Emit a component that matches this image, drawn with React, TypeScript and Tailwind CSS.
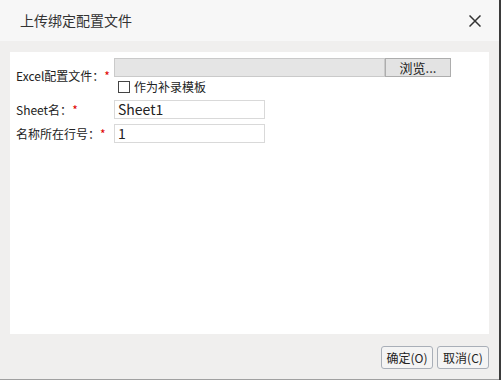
export default function App() {
  return (
    <div
      className="w-[501px] h-[380px] flex bg-[#f0efee] text-[#222]"
      style={{ fontFamily: '"Noto Sans CJK SC", "Noto Sans", sans-serif' }}
    >
      <div className="w-[499px] flex flex-col border-b border-[#a0a0a0]">
        {/* Header */}
        <div className="h-[41px] shrink-0 bg-[#f7f7f7] flex items-center justify-between pl-[20px] pr-[18px]">
          <span className="text-[14px] text-[#333]">上传绑定配置文件</span>
          <svg width="12" height="12" viewBox="0 0 12 12" className="text-[#333]">
            <path d="M0.5 0.5L11.5 11.5M11.5 0.5L0.5 11.5" stroke="currentColor" strokeWidth="1.5" />
          </svg>
        </div>

        {/* Body */}
        <div className="flex-1 flex flex-col px-[10px] pt-[11px]">
          <div className="flex-1 bg-white pl-[6px] pt-[6px] text-[12px]">
            {/* Excel file row */}
            <div className="flex items-center">
              <div className="w-[98px] shrink-0">
                Excel配置文件：<span className="text-[#e00000]">*</span>
              </div>
              <div className="flex flex-col">
                <div className="flex">
                  <div className="w-[271px] h-[19px] bg-[#e5e5e5] border border-[#cacaca]" />
                  <button className="w-[66px] h-[19px] bg-[#e3e3e3] border border-[#adadad] text-[13px] leading-none text-[#222]">
                    浏览...
                  </button>
                </div>
                <label className="mt-[3px] h-[14px] flex items-center pl-[4px]">
                  <span className="w-[12px] h-[12px] border border-[#444] bg-white" />
                  <span className="ml-[4px]">作为补录模板</span>
                </label>
              </div>
            </div>

            {/* Sheet row */}
            <div className="flex items-center mt-[6px]">
              <div className="w-[98px] shrink-0">
                Sheet名：<span className="text-[#e00000]">*</span>
              </div>
              <input
                className="w-[151px] h-[19px] border border-[#d9d9d9] px-[3px] text-[14px] outline-none"
                defaultValue="Sheet1"
              />
            </div>

            {/* Row number */}
            <div className="flex items-center mt-[5px]">
              <div className="w-[98px] shrink-0">
                名称所在行号：<span className="text-[#e00000]">*</span>
              </div>
              <input
                className="w-[151px] h-[19px] border border-[#d9d9d9] px-[3px] text-[14px] outline-none"
                defaultValue="1"
              />
            </div>
          </div>

          {/* Footer */}
          <div className="h-[45px] shrink-0 flex items-start justify-end gap-[4px] pt-[12px]">
            <button className="w-[52px] h-[23px] rounded-[3px] border border-[#a9afb8] bg-[#f4f4f4] text-[12px] text-[#222]">
              确定(O)
            </button>
            <button className="w-[52px] h-[23px] rounded-[3px] border border-[#a9afb8] bg-[#f4f4f4] text-[12px] text-[#222]">
              取消(C)
            </button>
          </div>
        </div>
      </div>
      <div className="w-[2px] bg-[#3b3b3b]" />
    </div>
  )
}
